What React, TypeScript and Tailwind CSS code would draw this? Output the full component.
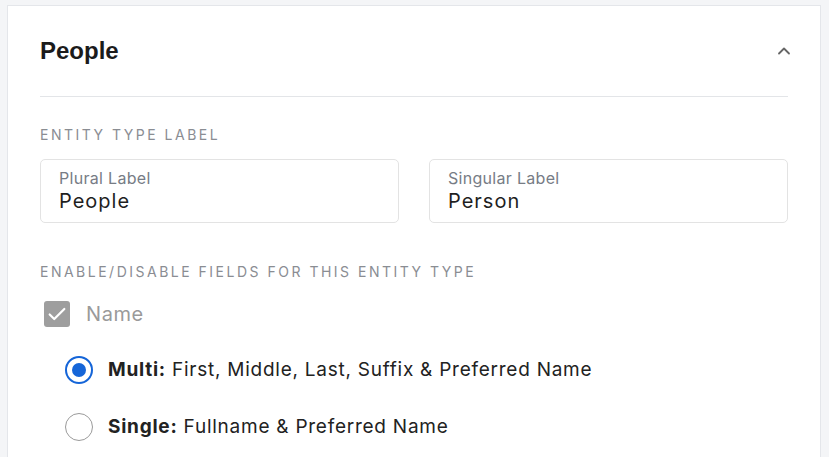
import { ChevronUp } from 'lucide-react'

const font = { fontFamily: 'Inter, "Liberation Sans", Arial, sans-serif' }
const headFont = { fontFamily: '"Liberation Sans", Arial, sans-serif' }

const LabelInput = ({ label, value }: { label: string; value: string }) => (
  <div className="flex h-[64px] flex-1 flex-col justify-center rounded-[5px] border border-[#e3e3e3] bg-white px-[18px]">
    <span className="text-[16px] leading-[19px] tracking-[0.3px] text-[#777c85]">{label}</span>
    <span className="text-[20px] leading-[26px] tracking-[1px] text-[#1f1f1f]">{value}</span>
  </div>
)

const Radio = ({ checked, bold, rest }: { checked?: boolean; bold: string; rest: string }) => (
  <label className="flex items-center gap-[15px]">
    <span
      className={
        checked
          ? 'flex h-[28px] w-[28px] items-center justify-center rounded-full border-[2.5px] border-[#1565d8]'
          : 'flex h-[28px] w-[28px] items-center justify-center rounded-full border-[1.5px] border-[#9a9a9a]'
      }
    >
      {checked && <span className="h-[14px] w-[14px] rounded-full bg-[#1565d8]" />}
    </span>
    <span className="text-[19px] tracking-[0.75px] text-[#222]">
      <b className="font-bold">{bold}</b> {rest}
    </span>
  </label>
)

export default function App() {
  return (
    <div className="min-h-screen bg-[#f4f5f7] pl-[7px] pr-[8px] pt-[5px]" style={font}>
      <div className="h-[460px] border border-[#e4e6ea] bg-white px-[32px]">
        <div className="flex h-[90px] items-center justify-between">
          <h2 className="text-[24px] font-bold text-[#1b1b1b]" style={headFont}>People</h2>
          <ChevronUp size={20} strokeWidth={2.2} className="mr-[-6px] text-[#666]" />
        </div>
        <div className="border-t border-[#e3e5e8]" />

        <div className="mt-[27px] text-[14px] uppercase tracking-[2.5px] text-[#8a8d93]">Entity Type Label</div>
        <div className="mt-[14px] flex gap-[30px]">
          <LabelInput label="Plural Label" value="People" />
          <LabelInput label="Singular Label" value="Person" />
        </div>

        <div className="mt-[38px] text-[14px] uppercase tracking-[2.5px] text-[#8a8d93]">
          Enable/Disable fields for this entity type
        </div>
        <div className="mt-[17px] flex items-center gap-[16px] pl-[4px]">
          <span className="flex h-[26px] w-[26px] items-center justify-center rounded-[3px] bg-[#9e9e9e]">
            <svg width="22" height="22" viewBox="0 0 24 24" fill="none" stroke="white" strokeWidth="2.4" strokeLinecap="round" strokeLinejoin="round">
              <path d="M4 12.5l5 5L20 6.5" />
            </svg>
          </span>
          <span className="text-[20px] tracking-[0.6px] text-[#9a9a9a]">Name</span>
        </div>

        <div className="mt-[27px] flex flex-col gap-[28px] pl-[25px]">
          <Radio checked bold="Multi:" rest="First, Middle, Last, Suffix & Preferred Name" />
          <Radio bold="Single:" rest="Fullname & Preferred Name" />
        </div>
      </div>
    </div>
  )
}
